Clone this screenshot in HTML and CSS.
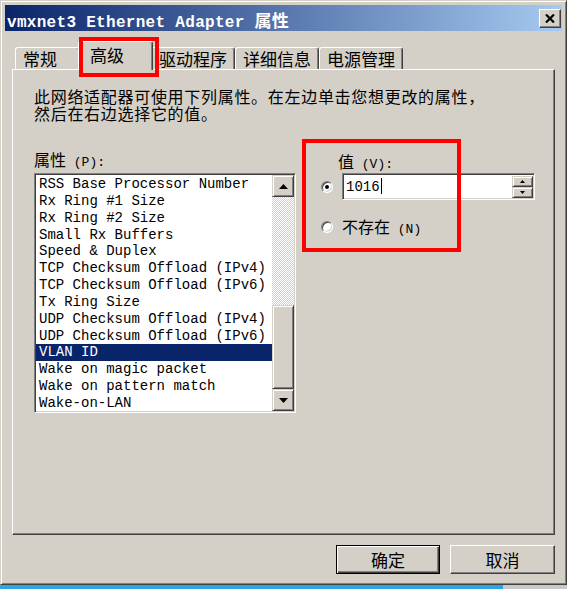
FILE: index.html
```html
<!DOCTYPE html>
<html lang="zh-CN">
<head>
    <meta charset="UTF-8">
    <title>vmxnet3 Ethernet Adapter 属性</title>
    <link rel="stylesheet" href="styles.css">
</head>
<body>
    <div class="dialog">
        <div class="title-bar">
            <span class="title-text">vmxnet3 Ethernet Adapter <span class="cjk">属性</span></span>
            <button class="close-btn" aria-label="关闭">
                <svg width="10" height="9" viewBox="0 0 10 9"><path d="M1 0.5 L9 8.5 M9 0.5 L1 8.5" stroke="#000" stroke-width="2.2"/></svg>
            </button>
        </div>

        <div class="tabs">
            <div class="tab">常规</div>
            <div class="tab active">高级</div>
            <div class="tab">驱动程序</div>
            <div class="tab">详细信息</div>
            <div class="tab">电源管理</div>
        </div>

        <div class="panel">
            <p class="desc">此网络适配器可使用下列属性。在左边单击您想更改的属性，<br>然后在右边选择它的值。</p>

            <div class="columns">
                <div class="prop-col">
                    <div class="field-label">属性<span class="hk"> (P):</span></div>
                    <div class="listbox">
                        <ul class="items">
                            <li>RSS Base Processor Number</li>
                            <li>Rx Ring #1 Size</li>
                            <li>Rx Ring #2 Size</li>
                            <li>Small Rx Buffers</li>
                            <li>Speed &amp; Duplex</li>
                            <li>TCP Checksum Offload (IPv4)</li>
                            <li>TCP Checksum Offload (IPv6)</li>
                            <li>Tx Ring Size</li>
                            <li>UDP Checksum Offload (IPv4)</li>
                            <li>UDP Checksum Offload (IPv6)</li>
                            <li class="selected">VLAN ID</li>
                            <li>Wake on magic packet</li>
                            <li>Wake on pattern match</li>
                            <li>Wake-on-LAN</li>
                        </ul>
                        <div class="scrollbar">
                            <div class="sb-btn">
                                <svg width="9" height="5" viewBox="0 0 9 5"><polygon points="0,5 9,5 4.5,0" fill="#000"/></svg>
                            </div>
                            <div class="sb-track"><div class="sb-thumb"></div></div>
                            <div class="sb-btn">
                                <svg width="9" height="5" viewBox="0 0 9 5"><polygon points="0,0 9,0 4.5,5" fill="#000"/></svg>
                            </div>
                        </div>
                    </div>
                </div>

                <div class="value-col">
                    <div class="field-label value-label">值<span class="hk"> (V):</span></div>
                    <div class="value-row">
                        <span class="radio checked"></span>
                        <div class="spin-field">
                            <span class="spin-text">1016<span class="caret"></span></span>
                            <div class="spin-btns">
                                <div class="spin-btn">
                                    <svg width="5" height="3" viewBox="0 0 5 3"><polygon points="0,3 5,3 2.5,0" fill="#000"/></svg>
                                </div>
                                <div class="spin-btn">
                                    <svg width="5" height="3" viewBox="0 0 5 3"><polygon points="0,0 5,0 2.5,3" fill="#000"/></svg>
                                </div>
                            </div>
                        </div>
                    </div>
                    <div class="absent-row">
                        <span class="radio"></span>
                        <span class="field-label">不存在<span class="hk"> (N)</span></span>
                    </div>
                </div>
            </div>
        </div>

        <div class="buttons">
            <button class="btn btn-default">确定</button>
            <button class="btn">取消</button>
        </div>
    </div>
</body>
</html>
```

FILE: styles.css
```css
*,
*::before,
*::after {
    margin: 0;
    padding: 0;
    box-sizing: border-box;
}

body {
    width: 567px;
    height: 589px;
    overflow: hidden;
    background: linear-gradient(to right, #2ba6e2 0, #2ba6e2 503px, #c8c8c8 503px);
    font-family: "Liberation Mono", "Noto Sans CJK SC", monospace;
    color: #000;
}

.dialog {
    width: 567px;
    height: 585px;
    padding: 4px 4px 0;
    background-color: #d4d0c8;
    border: 1px solid;
    border-color: #d4d0c8 #404040 #404040 #d4d0c8;
    box-shadow: inset 1px 1px #fff, inset -1px -1px #808080;
}

/* title bar */
.title-bar {
    height: 26px;
    padding: 0 1px 0 2px;
    display: flex;
    align-items: center;
    justify-content: space-between;
    background: linear-gradient(to right, #0a246a, #a6caf0);
}

.title-text {
    color: #fff;
    font-size: 16px;
    font-weight: bold;
    letter-spacing: 0.3px;
    padding-top: 3px;
    white-space: nowrap;
}

.title-text .cjk {
    font-family: "Noto Sans CJK SC", sans-serif;
    font-size: 17px;
}

.close-btn {
    width: 22px;
    height: 19px;
    display: flex;
    align-items: center;
    justify-content: center;
    background-color: #d4d0c8;
    border: 1px solid;
    border-color: #fff #404040 #404040 #fff;
    box-shadow: inset -1px -1px #808080;
}

/* tabs */
.tabs {
    height: 28px;
    margin-top: 10px;
    padding-left: 10px;
    display: flex;
    align-items: flex-end;
    position: relative;
    z-index: 1;
}

.tab {
    height: 22px;
    min-width: 65px;
    padding: 0 7px;
    font-family: "Noto Sans CJK SC", sans-serif;
    font-size: 17px;
    line-height: 21px;
    white-space: nowrap;
    background-color: #d4d0c8;
    border-top: 1px solid #fff;
    border-left: 1px solid #fff;
    border-right: 1px solid #404040;
    border-radius: 3px 3px 0 0;
    box-shadow: inset -1px 0 #808080;
}

.tab.active {
    height: 29px;
    min-width: 75px;
    margin: 0 -2px -1px;
    padding-left: 11px;
    line-height: 26px;
    position: relative;
}

/* red annotation over the tab */
.tab.active::after {
    content: "";
    position: absolute;
    left: 0;
    top: -5px;
    width: 80px;
    height: 40px;
    border: 4px solid #ff0000;
}

/* tab page */
.panel {
    height: 466px;
    margin: 0 7px;
    padding: 18px 20px 0 21px;
    border: 1px solid;
    border-color: #fff #404040 #404040 #fff;
    box-shadow: inset -1px -1px #808080;
}

.desc {
    font-family: "Noto Sans CJK SC", sans-serif;
    font-size: 16px;
    line-height: 17px;
    letter-spacing: 0.7px;
    white-space: nowrap;
}

.columns {
    display: flex;
    align-items: flex-start;
    margin-top: 17px;
}

.field-label {
    font-family: "Noto Sans CJK SC", sans-serif;
    font-size: 16px;
    line-height: 17px;
    white-space: nowrap;
}

.hk {
    font-family: "Liberation Mono", monospace;
    font-size: 13px;
    line-height: 10px;
}

.prop-col {
    width: 262px;
    margin-top: 12px;
}

.listbox {
    height: 240px;
    margin-top: 5px;
    padding: 1px;
    display: flex;
    background-color: #fff;
    border: 1px solid;
    border-color: #808080 #fff #fff #808080;
    box-shadow: inset 1px 1px #404040, inset -1px -1px #d4d0c8;
}

.items {
    flex: 1;
    list-style: none;
    padding-top: 1px;
    overflow: hidden;
    font-size: 14px;
    line-height: 16.85px;
}

.items li {
    padding-left: 3px;
    white-space: nowrap;
}

.items li.selected {
    background-color: #0a246a;
    color: #fff;
}

.scrollbar {
    width: 22px;
    display: flex;
    flex-direction: column;
}

.sb-btn,
.sb-thumb,
.spin-btn,
.btn {
    background-color: #d4d0c8;
    border: 1px solid;
    border-color: #d4d0c8 #404040 #404040 #d4d0c8;
    box-shadow: inset 1px 1px #fff, inset -1px -1px #808080;
}

.sb-btn {
    height: 22px;
    display: flex;
    align-items: center;
    justify-content: center;
}

.sb-track {
    flex: 1;
    padding-top: 108px;
    background: repeating-conic-gradient(#fff 0 25%, #d4d0c8 0 50%) 0 0 / 2px 2px;
}

.sb-thumb {
    height: 84px;
}

/* value group, framed in red */
.value-col {
    width: 159px;
    height: 113px;
    margin-left: 6px;
    padding: 14px 0 0 4px;
    position: relative;
}

.value-col::after {
    content: "";
    position: absolute;
    inset: 0;
    border: 4px solid #ff0000;
}

.value-label {
    margin-left: 32px;
}

.value-row {
    height: 27px;
    margin-top: 3px;
    padding-left: 15px;
    display: flex;
    align-items: center;
}

.radio {
    width: 12px;
    height: 12px;
    flex-shrink: 0;
    border-radius: 50%;
    background-color: #fff;
    border: 1px solid;
    border-color: #808080 #fff #fff #808080;
    box-shadow: inset 1px 1px #404040, inset -1px -1px #d4d0c8;
    display: flex;
    align-items: center;
    justify-content: center;
}

.radio.checked::after {
    content: "";
    width: 4px;
    height: 4px;
    border-radius: 50%;
    background-color: #000;
}

.spin-field {
    width: 193px;
    height: 27px;
    flex-shrink: 0;
    margin-left: 9px;
    padding: 2px 0 1px 2px;
    display: flex;
    background-color: #fff;
    border: 1px solid;
    border-color: #808080 #fff #fff #808080;
    box-shadow: inset 1px 1px #404040, inset -1px -1px #d4d0c8;
}

.spin-text {
    flex: 1;
    padding-left: 1px;
    font-size: 14px;
    line-height: 22px;
}

.caret {
    display: inline-block;
    width: 1px;
    height: 16px;
    margin-left: 1px;
    vertical-align: -3px;
    background-color: #000;
}

.spin-btns {
    width: 21px;
    margin-right: 1px;
    display: flex;
    flex-direction: column;
}

.spin-btn {
    flex: 1;
    display: flex;
    align-items: center;
    justify-content: center;
}

.absent-row {
    margin-top: 18px;
    padding-left: 15px;
    display: flex;
    align-items: center;
    gap: 9px;
}

/* dialog buttons */
.buttons {
    margin-top: 10px;
    padding-right: 7px;
    display: flex;
    justify-content: flex-end;
    gap: 10px;
}

.btn {
    width: 105px;
    height: 29px;
    font-family: "Noto Sans CJK SC", sans-serif;
    font-size: 17px;
    color: #000;
    border-color: #fff #404040 #404040 #fff;
    box-shadow: inset -1px -1px #808080;
}

.btn-default {
    width: 104px;
    border: 1px solid #000;
    box-shadow: inset 1px 1px #fff, inset -1px -1px #404040, inset -2px -2px #808080;
}
```
